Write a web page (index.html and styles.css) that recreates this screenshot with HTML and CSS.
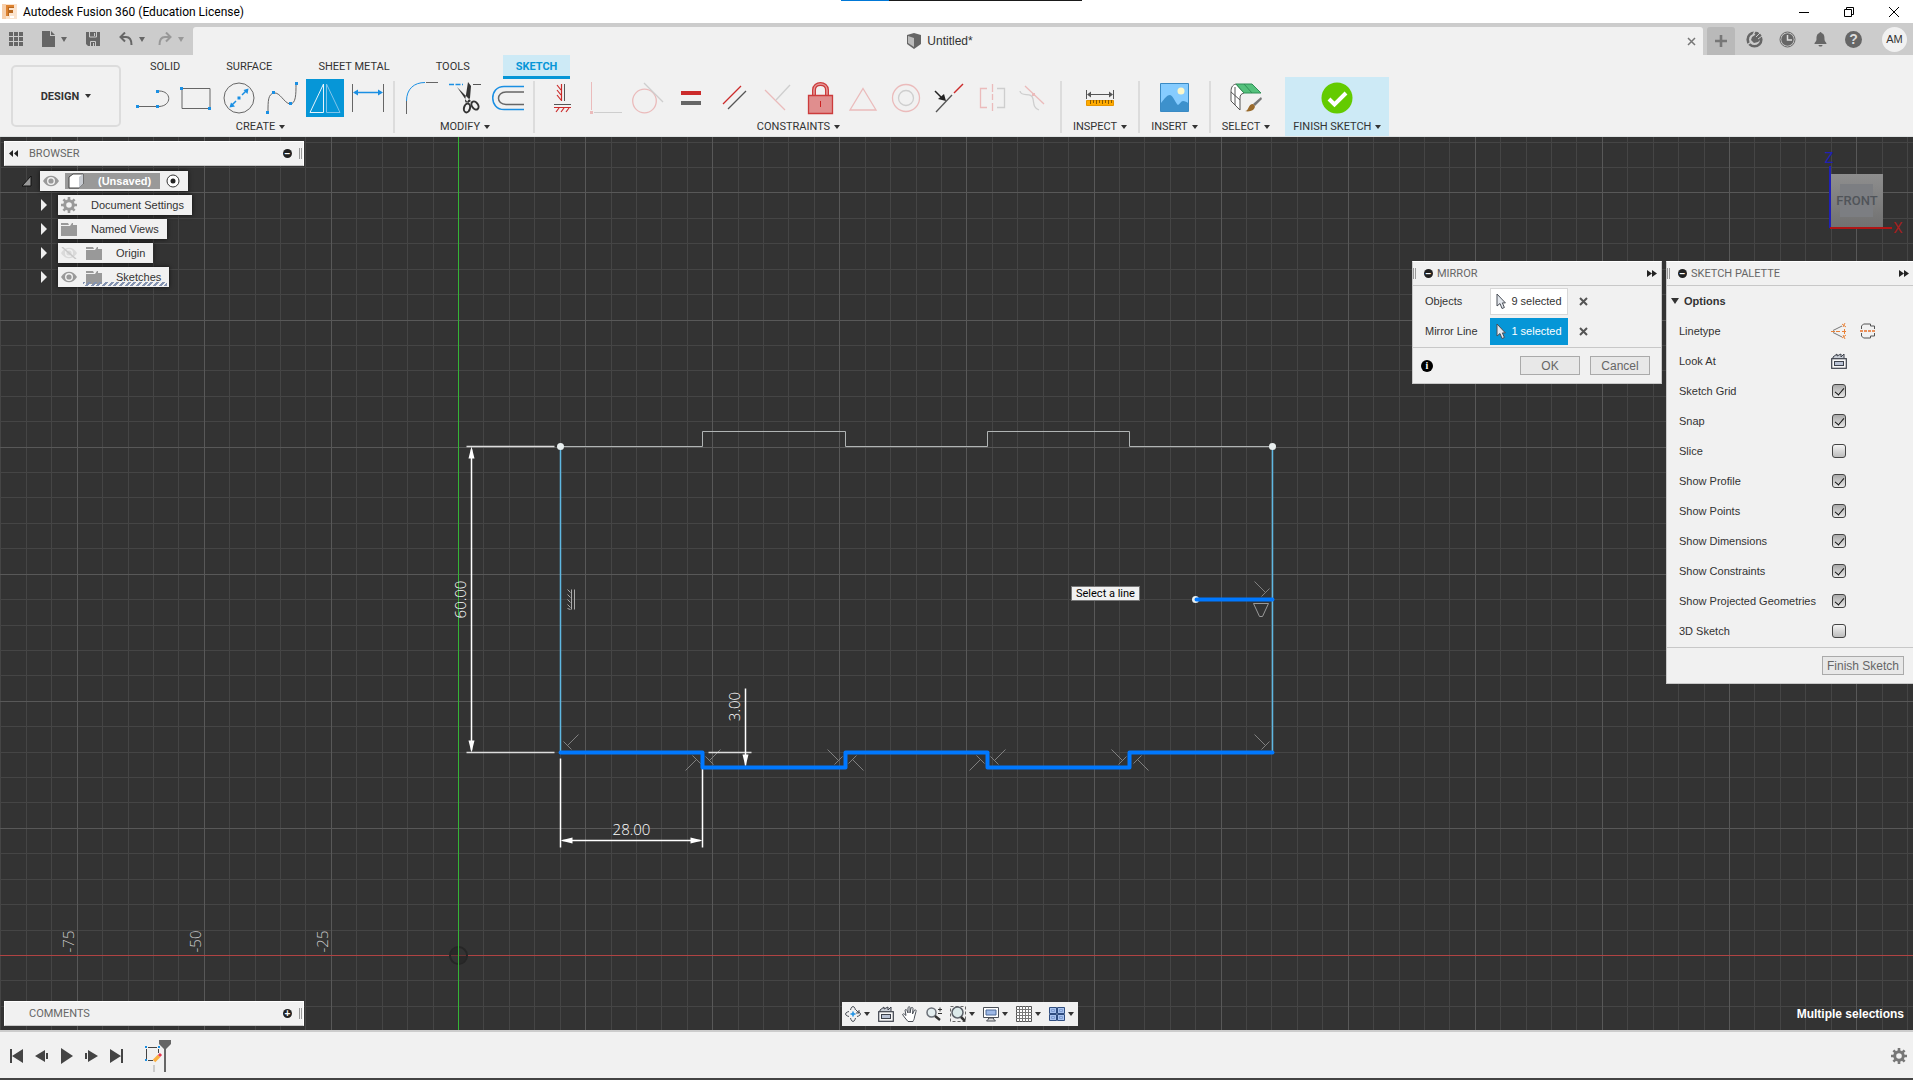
FILE: index.html
```html
<!DOCTYPE html>
<html lang="en">
<head>
    <meta charset="UTF-8">
    <meta name="viewport" content="width=device-width, initial-scale=1.0">
    <title>Autodesk Fusion 360 (Education License)</title>
    <link rel="stylesheet" href="styles.css">
</head>
<body>

<svg class="defs" width="0" height="0" aria-hidden="true">
    <symbol id="eye" viewBox="0 0 16 12">
        <path d="M0 6C4 -1 12 -1 16 6C12 13 4 13 0 6Z" fill="#999"/>
        <circle cx="8" cy="6" r="4" fill="#f1f1f1"/>
        <circle cx="8" cy="6" r="2.6" fill="#999"/>
    </symbol>
    <symbol id="folder" viewBox="0 0 16 14">
        <path d="M0 1h7l1 2H0zM0 4h9l2-3h1v2h4v11H0z" fill="#999"/>
    </symbol>
    <symbol id="gear" viewBox="-8 -8 16 16">
        <circle r="4.3" fill="none" stroke="currentColor" stroke-width="3"/>
        <path d="M0-8v3M0 8v-3M-8 0h3M8 0h-3M-5.6-5.6l2 2M5.6-5.6l-2 2M-5.6 5.6l2-2M5.6 5.6l-2-2" stroke="currentColor" stroke-width="2.6"/>
    </symbol>
    <symbol id="lookat" viewBox="0 0 16 16">
        <path d="M2 6V4l4-3v2l4-2v3l3-3v4" fill="#c9ced6" stroke="#3c414b"/>
        <rect x="0.7" y="5.7" width="14.6" height="9.6" fill="#f8f8f8" stroke="#3c414b" stroke-width="1.2"/>
        <rect x="3.5" y="8.5" width="9" height="4" fill="#b9c2d4" stroke="#3c414b"/>
    </symbol>
    <symbol id="cursor" viewBox="0 0 10 17">
        <path d="M1 1v12l3-2.5 2 5 2.4-1-2-4.6h3z" fill="#e4e8ee" stroke="#4a4f57"/>
    </symbol>
</svg>

<div id="app">
    <header class="titlebar">
        <svg width="15" height="15" viewBox="0 0 15 15"><rect width="15" height="15" fill="#fbe3cd"/><path d="M0 0h4v15H0z" fill="#f7cfab"/><path d="M4 1h8v3H7v2h4v3H7v3H4z" fill="#b8671f"/><path d="M4 1h8v2H6v9H4z" fill="#dd8230"/><path d="M8 12h4v2H8z" fill="#fff"/></svg>
        <h1>Autodesk Fusion 360 (Education License)</h1>
        <div class="drag-strip"></div>
        <div class="window-buttons">
            <button aria-label="Minimize"><svg width="12" height="12"><path d="M1 6.500h10" stroke="#000"/></svg></button>
            <button aria-label="Restore"><svg width="12" height="12" fill="none" stroke="#000"><path d="M1.500 3.500h7v7h-7zM3.500 3.500v-2h7v7h-2"/></svg></button>
            <button aria-label="Close"><svg width="12" height="12"><path d="M1 1l10 10M11 1L1 11" stroke="#000"/></svg></button>
        </div>
    </header>

    <div class="tabstrip">
        <div class="quick-access">
            <button aria-label="Data panel"><svg width="14" height="14" fill="#666"><path d="M0 0h4v4H0zM5 0h4v4H5zM10 0h4v4h-4zM0 5h4v4H0zM5 5h4v4H5zM10 5h4v4h-4zM0 10h4v4H0zM5 10h4v4H5zM10 10h4v4h-4z"/></svg></button>
            <button aria-label="File"><svg width="13" height="16" fill="#666"><path d="M0 0h8v5h5v11H0zM9 0l4 4H9z"/></svg><span class="caret"></span></button>
            <button aria-label="Save"><svg width="14" height="14"><path d="M0 0h14v14H2L0 12z" fill="#666"/><path d="M3.500 0v5h7V0M4.500 14V9.500h5V14" fill="none" stroke="#ccc"/><path d="M7 11h1v3H7zM8 1h1v3H8z" fill="#ccc"/></svg></button>
            <button aria-label="Undo"><svg width="14" height="14"><path d="M1.500 5H7c4 0 5.500 3 5.500 8M6 0.500L1.500 5 6 9.500" fill="none" stroke="#666" stroke-width="2"/></svg><span class="caret"></span></button>
            <button class="disabled" aria-label="Redo"><svg width="14" height="14"><path d="M12.500 5H7c-4 0-5.500 3-5.500 8M8 0.500L12.500 5 8 9.500" fill="none" stroke="#666" stroke-width="2"/></svg><span class="caret"></span></button>
        </div>
        <div class="doc-tab">
            <span class="doc-name">
                <svg width="14" height="16"><path d="M0 2l7-2 7 2v9l-7 5-7-5z" fill="#666"/><path d="M1 3l6 2v9l-6-4z" fill="#bbb"/></svg>
                Untitled*
            </span>
            <button aria-label="Close document"><svg width="9" height="9"><path d="M1 1l7 7M8 1L1 8" stroke="#777" stroke-width="1.500"/></svg></button>
        </div>
        <button class="new-tab" aria-label="New document"><svg width="14" height="14"><path d="M7 1v12M1 7h12" stroke="#777" stroke-width="2.600"/></svg></button>
        <div class="account">
            <button aria-label="Extensions"><svg width="17" height="17"><circle cx="8.500" cy="8.500" r="6.800" fill="none" stroke="#666" stroke-width="2.600"/><path d="M1 14l7-5M9 0l-2 4" stroke="#ccc" stroke-width="1.500" fill="none"/><path d="M6 6l3-2 1-3 2 0 0 3 3 0-1 3 1 1-3 3-4 1-3-3z" fill="#666"/><path d="M10 6l4-4M12 8l4-3" stroke="#ccc" stroke-width="1"/></svg></button>
            <button aria-label="Job status"><svg width="17" height="17"><circle cx="8.500" cy="8.500" r="7.500" fill="none" stroke="#666"/><circle cx="8.500" cy="8.500" r="6.200" fill="#666"/><path d="M8.500 4v5h4.500" fill="none" stroke="#ddd" stroke-width="1.500"/></svg></button>
            <button aria-label="Notifications"><svg width="17" height="17" fill="#666"><path d="M8.500 1c1 0 1 1 1 1 3 1 3 4 3 6 0 3 2 3 2 5h-12c0-2 2-2 2-5 0-2 0-5 3-6 0 0 0-1 1-1zM6.500 14h4c0 2-4 2-4 0z"/></svg></button>
            <button class="help" aria-label="Help">?</button>
            <button class="avatar">AM</button>
        </div>
    </div>

    <div class="ribbon">
        <button class="workspace">DESIGN <span class="caret"></span></button>
        <div class="ribbon-body">
            <nav class="ribbon-tabs">
                <button>SOLID</button>
                <button>SURFACE</button>
                <button>SHEET METAL</button>
                <button>TOOLS</button>
                <button class="active">SKETCH</button>
            </nav>
            <div class="groups">
                <section class="group">
                    <div class="tools">
                        <button aria-label="Line"><svg width="34" height="34" fill="none"><path d="M2 25.500h20M23 10c13 0 13 15 0 15.500" stroke="#666"/><path d="M0 24h3v3H0zM20 24h3v3h-3zM20 9h3v3h-3z" fill="#1a8fe3"/></svg></button>
                        <button aria-label="Rectangle"><svg width="34" height="34" fill="none"><path d="M3 7.500h28v20H3z" stroke="#666"/><path d="M1 6h3v3H1zM29 26h3v3h-3z" fill="#1a8fe3"/></svg></button>
                        <button aria-label="Circle"><svg width="34" height="34" fill="none"><circle cx="17" cy="17" r="15" stroke="#666"/><path d="M9 25l5-5M20 14l5-5" stroke="#1a8fe3" stroke-width="1.500"/><path d="M7.500 26.500l1.500-5 4 4zM26.500 7.500l-5 1.500 4 4zM15.500 15.500h3v3h-3z" fill="#1a8fe3"/></svg></button>
                        <button aria-label="Spline"><svg width="34" height="34" fill="none"><path d="M3 31C3 20 3 13 9 12s10 10 16 11c6 0 6-10 6-20" stroke="#666"/><path d="M1 30h3v3H1zM7 10h3v3H7zM24 21h3v3h-3zM30 1h3v3h-3z" fill="#1a8fe3"/></svg></button>
                        <button class="active" aria-label="Mirror"><svg width="34" height="34" fill="none"><path d="M15.500 3v28.500H2z" stroke="#e8f4fb"/><path d="M18.500 3v28.500H32z" stroke="#7fc4ea"/></svg></button>
                        <button aria-label="Dimension"><svg width="34" height="34" fill="none"><path d="M1.500 3v28M32.500 3v28" stroke="#666"/><path d="M4 11.500h26" stroke="#1a8fe3" stroke-width="1.500"/><path d="M2 11.500l5-3v6zM32 11.500l-5-3v6z" fill="#1a8fe3"/></svg></button>
                    </div>
                    <button class="group-label">CREATE <span class="caret"></span></button>
                </section>
                <section class="group">
                    <div class="tools">
                        <button aria-label="Fillet"><svg width="34" height="34" fill="none"><path d="M1.500 20v13M21 1.500h12" stroke="#666"/><path d="M1.500 20C1.500 8 9 1.500 20 1.500" stroke="#1a8fe3"/></svg></button>
                        <button aria-label="Trim"><svg width="34" height="34" fill="none"><path d="M1 3.500h14" stroke="#1a8fe3" stroke-width="1.300" stroke-dasharray="5 1.500"/><path d="M25 3.500h8" stroke="#555"/><path d="M9 6l11 16 3-2zM20 1l3 4-1 12-4 5-1-2z" fill="#333"/><ellipse cx="19" cy="27" rx="3" ry="4.500" transform="rotate(15 19 27)" stroke="#333" stroke-width="2"/><ellipse cx="27" cy="24.500" rx="4.500" ry="3" transform="rotate(55 27 24.500)" stroke="#333" stroke-width="2"/></svg></button>
                        <button aria-label="Offset"><svg width="34" height="34" fill="none"><path d="M33 5.500H13c-15 0-15 23 0 23h20" stroke="#1a8fe3" stroke-width="1.500"/><path d="M33 11H15c-10 0-10 12.500 0 12.500h18" stroke="#666" stroke-width="1.500"/></svg></button>
                    </div>
                    <button class="group-label">MODIFY <span class="caret"></span></button>
                </section>
                <section class="group">
                    <div class="tools">
                        <button aria-label="Horizontal/Vertical"><svg width="34" height="34" fill="none"><path d="M19.500 3v17M9 23.500h17" stroke="#555"/><path d="M16.500 3v17M9 26.500h17M12 4l4 5M12 9l4 5M12 14l4 5M14 27l-3 4M19 27l-3 4M24 27l-3 4" stroke="#cc2b2b" stroke-width="1.200"/></svg></button>
                        <button class="faded" aria-label="Coincident"><svg width="34" height="34" fill="none"><path d="M3.500 1v28" stroke="#d33"/><path d="M6 31.500h28" stroke="#777"/><path d="M2 30h3v3H2z" fill="#d33"/></svg></button>
                        <button class="faded" aria-label="Tangent"><svg width="34" height="34" fill="none"><circle cx="13.500" cy="20" r="11.800" stroke="#d33" stroke-width="1.300"/><path d="M13 2l19 19" stroke="#777" stroke-width="1.300"/></svg></button>
                        <button aria-label="Equal"><svg width="34" height="34"><path d="M7 10h20v4H7z" fill="#cc2b2b"/><path d="M7 20h20v4H7z" fill="#666"/></svg></button>
                        <button aria-label="Parallel"><svg width="34" height="34"><path d="M6 23L24 5" stroke="#cc2b2b" stroke-width="1.300"/><path d="M11 28l18-18" stroke="#555" stroke-width="1.300"/></svg></button>
                        <button class="faded" aria-label="Perpendicular"><svg width="34" height="34"><path d="M5 9l20 20" stroke="#d33" stroke-width="1.300"/><path d="M16 19L30 4" stroke="#777" stroke-width="1.300"/></svg></button>
                        <button aria-label="Fix/Unfix"><svg width="34" height="34" fill="none"><path d="M11 14V9c0-8 13-8 13 0v5" stroke="#cc3c3c" stroke-width="4"/><path d="M11 14V9c0-8 13-8 13 0v5" stroke="#e59a9a" stroke-width="1.500"/><path d="M5.500 14.500h24v18h-24z" fill="#e08e8e" stroke="#cc3c3c" stroke-width="1.300"/><path d="M17.500 20v6" stroke="#c22"/></svg></button>
                        <button class="faded" aria-label="Midpoint"><svg width="34" height="34" fill="none"><path d="M17 7.500l13 21.500H4z" stroke="#d33" stroke-width="1.300"/></svg></button>
                        <button class="faded" aria-label="Concentric"><svg width="34" height="34" fill="none"><circle cx="17" cy="17" r="13.500" stroke="#d33" stroke-width="1.300"/><circle cx="17" cy="17" r="7.500" stroke="#777" stroke-width="1.300"/></svg></button>
                        <button aria-label="Collinear"><svg width="34" height="34"><path d="M4 31l16-17" stroke="#555" stroke-width="1.300"/><path d="M22 12l9-9" stroke="#cc2b2b" stroke-width="1.500"/><path d="M3 10l6 6" stroke="#222" stroke-width="1.500"/><path d="M14 20l-8-2 6-5z" fill="#222"/></svg></button>
                        <button class="faded" aria-label="Symmetry"><svg width="34" height="34" fill="none"><path d="M12 7.500H5.500v19H12M17.500 3v8M17.500 13v6M17.500 22v8" stroke="#d33" stroke-width="1.300"/><path d="M22 7.500h7.500v19H22" stroke="#777" stroke-width="1.300"/></svg></button>
                        <button class="faded" aria-label="Curvature"><svg width="34" height="34" fill="none"><path d="M7 5l19 18" stroke="#d33" stroke-width="1.300"/><path d="M2 10c1 7 12 0 13 8 1 4 0 9 6 11" stroke="#777" stroke-width="1.300"/><path d="M14 12h3v3h-3z" fill="#d33"/></svg></button>
                    </div>
                    <button class="group-label">CONSTRAINTS <span class="caret"></span></button>
                </section>
                <section class="group narrow">
                    <div class="tools">
                        <button aria-label="Measure"><svg width="34" height="34" fill="none"><path d="M3.500 9v9M30.500 9v9M5 13.500h24" stroke="#555"/><path d="M4 13.500l4-3v6zM30 13.500l-4-3v6z" fill="#555"/><path d="M3.500 19.500h27v5h-27z" fill="#ffab00" stroke="#e69500"/><path d="M7.500 19v4M10.500 19v3M13.500 19v4M16.500 19v3M19.500 19v4M22.500 19v3M25.500 19v4M28.500 19v3" stroke="#8a5a00"/></svg></button>
                    </div>
                    <button class="group-label">INSPECT <span class="caret"></span></button>
                </section>
                <section class="group narrow">
                    <div class="tools">
                        <button aria-label="Insert image"><svg width="34" height="34"><path d="M3.500 2.500h28v28h-28z" fill="#86ccff" stroke="#3a8ac4"/><circle cx="24" cy="10" r="3.500" fill="#fdf7c9"/><path d="M4 22c4-5 6-8 9-8s6 9 8 10c2-1 3-4 5-4s4 1 5 2v8H4z" fill="#3d91cc"/></svg></button>
                    </div>
                    <button class="group-label">INSERT <span class="caret"></span></button>
                </section>
                <section class="group narrow">
                    <div class="tools">
                        <button aria-label="Select"><svg width="34" height="34"><path d="M7 3c-4 1-5 4-5 8v9l9 9V17c0-3 1-4 4-5z" fill="#fff" stroke="#555"/><path d="M2 11l9 8M6 6v18" stroke="#555" fill="none"/><path d="M7 3h16l9 9H15z" fill="#54c17c" stroke="#2f8f56"/><path d="M15 3l8 9" stroke="#2f8f56"/><path d="M24 23l8-7 1 2-7 7z" fill="#777"/><path d="M16 30c4 0 3-7 8-7 3 2 2 4 0 6-2 1-5 2-8 1z" fill="#996a2c"/></svg></button>
                    </div>
                    <button class="group-label">SELECT <span class="caret"></span></button>
                </section>
                <section class="group finish">
                    <div class="tools">
                        <button aria-label="Finish"><svg width="34" height="34" fill="none"><circle cx="17" cy="17" r="15.500" fill="#63cb00"/><path d="M9 18l5.500 5.500L26 12" stroke="#fff" stroke-width="4"/></svg></button>
                    </div>
                    <button class="group-label">FINISH SKETCH <span class="caret"></span></button>
                </section>
            </div>
        </div>
    </div>

    <main class="canvas">
        <svg class="drawing">
            <defs>
                <g id="perp"><path d="M0 0L11-11M-4-4L4 4"/></g>
                <path id="arrow" d="M0 0L-3 12H3Z"/>
            </defs>
            <g transform="translate(458.500 818.500)" fill="none">
                <g id="grid" shape-rendering="crispEdges">
                    <path class="minor"/>
                    <path class="major"/>
                </g>
                <path d="M-500 0H2000" stroke="#b04343"/>
                <circle r="8.500" stroke="#262626" stroke-width="2"/>
                <path d="M0 0V-8A8 8 0 0 0-8 0ZM0 0V8A8 8 0 0 0 8 0Z" fill="#292929"/>
                <path d="M0-900V300" stroke="#35b435"/>
                <g class="axis-labels">
                    <text transform="translate(-385 -14) rotate(-90)">-75</text>
                    <text transform="translate(-258 -14) rotate(-90)">-50</text>
                    <text transform="translate(-131 -14) rotate(-90)">-25</text>
                </g>

                <!-- profile -->
                <path d="M102-509H244V-524H387V-509H529V-524H671V-509H814" stroke="#b0b4b4"/>
                <path d="M102-509V-203M814-509V-203" stroke="#5fb8e2" stroke-width="1.500"/>

                <g stroke="#808080">
                    <use href="#perp" transform="translate(109 -210)"/>
                    <use href="#perp" transform="translate(238 -196) rotate(180)"/>
                    <use href="#perp" transform="translate(251 -195)"/>
                    <use href="#perp" transform="translate(380 -195) rotate(-90)"/>
                    <use href="#perp" transform="translate(394 -196) rotate(90)"/>
                    <use href="#perp" transform="translate(522 -196) rotate(180)"/>
                    <use href="#perp" transform="translate(536 -195)"/>
                    <use href="#perp" transform="translate(664 -195) rotate(-90)"/>
                    <use href="#perp" transform="translate(679 -196) rotate(90)"/>
                    <use href="#perp" transform="translate(807 -210) rotate(-90)"/>
                    <use href="#perp" transform="translate(807 -363) rotate(-90)"/>
                    <path d="M795-352H810L804-339H801Z" stroke="#999"/>
                    <path d="M113-366V-346M116-366V-346" stroke="#aaa"/>
                    <path d="M109-366l3 3M109-361l3 3M109-356l3 3M109-351l3 3M109-347l3 1" stroke="#aaa"/>
                </g>

                <!-- dimensions -->
                <g stroke="#fff" stroke-width="1.500">
                    <path d="M8-509H96M8-203H96M250-203H293" stroke="#ddd"/>
                    <path d="M13-506V-205M287-267V-190M102-197V-108M244-187V-108M104-115H242"/>
                </g>
                <g fill="#fff">
                    <use href="#arrow" transform="translate(13 -509)"/>
                    <use href="#arrow" transform="translate(13 -203) rotate(180)"/>
                    <use href="#arrow" transform="translate(287 -189) rotate(180)"/>
                    <use href="#arrow" transform="translate(102 -115) rotate(-90)"/>
                    <use href="#arrow" transform="translate(244 -115) rotate(90)"/>
                </g>
                <g class="dimension-labels">
                    <text transform="translate(7 -356) rotate(-90)">60.00</text>
                    <text transform="translate(281 -249) rotate(-90)">3.00</text>
                    <text transform="translate(173 -121)">28.00</text>
                </g>

                <circle cx="737" cy="-356" r="3.500" fill="#e8eeee"/>
                <path d="M102-203H244V-188H387V-203H529V-188H671V-203H814M738-356H814" stroke="#0078ff" stroke-width="4" stroke-linejoin="round" stroke-linecap="round"/>
                <circle cx="102" cy="-509" r="3.500" fill="#e8eeee"/>
                <circle cx="814" cy="-509" r="3.500" fill="#e8eeee"/>
            </g>
        </svg>
        <div class="tooltip">Select a line</div>

        <div class="view-cube">
            <svg width="90" height="100" viewBox="0 -10 90 100">
                <defs>
                    <linearGradient id="face" x2="0" y2="1"><stop stop-color="#8e8e8e"/><stop offset="1" stop-color="#717171"/></linearGradient>
                </defs>
                <path d="M16 25h52v53H16z" fill="url(#face)"/>
                <path d="M25 35h33v33H25z" fill="#7c7e82"/>
                <text x="42" y="56" font-size="13" font-weight="500" fill="#505459">FRONT</text>
                <path d="M15 17v62" stroke="#2020b8" stroke-width="2"/>
                <path d="M15 79h62" stroke="#b01515" stroke-width="2"/>
                <text x="14" y="14" font-size="15" fill="#2020b8">Z</text>
                <text x="83" y="84" font-size="15" fill="#a02020">X</text>
            </svg>
        </div>

        <div class="browser">
            <div class="bar">
                <svg width="9" height="7"><path d="M4 0v7L0 3.500zM9 0v7L5 3.500z" fill="#222"/></svg>
                <span class="bar-title">BROWSER</span>
                <button class="dot" aria-label="Collapse">&minus;</button>
                <span class="grip"></span>
            </div>
            <ul class="tree">
                <li class="root">
                    <svg width="10" height="12"><path d="M9 1v10H0z" fill="#999" stroke="#111"/></svg>
                    <span class="node">
                        <svg width="16" height="12"><use href="#eye"/></svg>
                        <span class="selected">
                            <svg width="16" height="16"><path d="M1 4l4-3h10v10l-4 4H1z" fill="#fff" stroke="#444"/><path d="M11 4l4-3v10l-4 4z" fill="#c8ccd2"/></svg>
                            (Unsaved)
                        </span>
                        <svg width="14" height="14"><circle cx="7" cy="7" r="6" fill="#fff" stroke="#333"/><circle cx="7" cy="7" r="2.500" fill="#222"/></svg>
                    </span>
                </li>
                <li>
                    <span class="expander"></span>
                    <span class="node"><svg class="gray" width="16" height="16"><use href="#gear"/></svg><span>Document Settings</span></span>
                </li>
                <li>
                    <span class="expander"></span>
                    <span class="node"><svg width="16" height="14"><use href="#folder"/></svg><span>Named Views</span></span>
                </li>
                <li>
                    <span class="expander"></span>
                    <span class="node"><svg width="16" height="12" opacity="0.250"><use href="#eye"/><path d="M1 0l14 12" stroke="#555" stroke-width="1.500"/></svg><svg width="16" height="14"><use href="#folder"/></svg><span>Origin</span></span>
                </li>
                <li>
                    <span class="expander"></span>
                    <span class="node sketches"><svg width="16" height="12"><use href="#eye"/></svg><svg width="16" height="14"><use href="#folder"/></svg><span>Sketches</span></span>
                </li>
            </ul>
        </div>

        <section class="panel mirror">
            <div class="bar">
                <span class="grip"></span>
                <button class="dot" aria-label="Collapse">&minus;</button>
                <span class="bar-title">MIRROR</span>
                <svg width="10" height="7"><path d="M0 0v7l5-3.500zM5 0v7l5-3.500z" fill="#222"/></svg>
            </div>
            <div class="mirror-rows">
                <div class="row">
                    <label for="objects">Objects</label>
                    <button id="objects" class="picker"><svg width="10" height="17"><use href="#cursor"/></svg>9 selected</button>
                    <button class="clear" aria-label="Clear objects"><svg width="9" height="9"><path d="M1 1l7 7M8 1L1 8" stroke="#555" stroke-width="2"/></svg></button>
                </div>
                <div class="row">
                    <label for="mirrorLine">Mirror Line</label>
                    <button id="mirrorLine" class="picker active"><svg width="10" height="17"><use href="#cursor"/></svg>1 selected</button>
                    <button class="clear" aria-label="Clear mirror line"><svg width="9" height="9"><path d="M1 1l7 7M8 1L1 8" stroke="#555" stroke-width="2"/></svg></button>
                </div>
            </div>
            <div class="panel-footer">
                <span class="info">i</span>
                <button class="push">OK</button>
                <button class="push">Cancel</button>
            </div>
        </section>

        <section class="panel palette">
            <div class="bar">
                <span class="grip"></span>
                <button class="dot" aria-label="Collapse">&minus;</button>
                <span class="bar-title">SKETCH PALETTE</span>
                <svg width="10" height="7"><path d="M0 0v7l5-3.500zM5 0v7l5-3.500z" fill="#222"/></svg>
            </div>
            <div class="options">
                <h2><span class="caret"></span>Options</h2>
                <div class="row">
                    <span class="name">Linetype</span>
                    <button aria-label="Construction"><svg width="16" height="16" fill="none"><path d="M11 3L2 7.500M11 14L2 9.500" stroke="#777"/><path d="M0 8.500h4M5 8.500h4M13.500 6v5M11 8.500h4M11 1l4 3M14 0l-2 4M11 15l4-3M14 16l-2-4" stroke="#e8833a"/></svg></button>
                    <button aria-label="Centerline"><svg width="16" height="16" fill="none"><path d="M1.500 6V3l2-2h7v2h4v3M1.500 10v3l2 2h7v-2h4v-3" stroke="#555"/><path d="M0 8h16" stroke="#e8702a" stroke-width="1.500" stroke-dasharray="3 1"/></svg></button>
                </div>
                <div class="row">
                    <span class="name">Look At</span>
                    <button aria-label="Look At"><svg width="16" height="16"><use href="#lookat"/></svg></button>
                </div>
                <div class="row"><label for="grid-on">Sketch Grid</label><input type="checkbox" id="grid-on" checked></div>
                <div class="row"><label for="snap">Snap</label><input type="checkbox" id="snap" checked></div>
                <div class="row"><label for="slice">Slice</label><input type="checkbox" id="slice"></div>
                <div class="row"><label for="profile">Show Profile</label><input type="checkbox" id="profile" checked></div>
                <div class="row"><label for="points">Show Points</label><input type="checkbox" id="points" checked></div>
                <div class="row"><label for="dims">Show Dimensions</label><input type="checkbox" id="dims" checked></div>
                <div class="row"><label for="cons">Show Constraints</label><input type="checkbox" id="cons" checked></div>
                <div class="row"><label for="proj">Show Projected Geometries</label><input type="checkbox" id="proj" checked></div>
                <div class="row"><label for="sketch3d">3D Sketch</label><input type="checkbox" id="sketch3d"></div>
            </div>
            <div class="panel-footer">
                <button class="push wide">Finish Sketch</button>
            </div>
        </section>

        <div class="bar comments">
            <span class="bar-title">COMMENTS</span>
            <button class="dot" aria-label="Expand">+</button>
            <span class="grip"></span>
        </div>

        <div class="navbar">
            <button aria-label="Orbit"><svg width="16" height="16" fill="none" stroke="#4a4f57"><ellipse cx="8" cy="8" rx="7.500" ry="3"/><ellipse cx="8" cy="8" rx="3" ry="7.500"/><path d="M4 4h8v8H4z" fill="#f1f1f1" stroke="none"/><path d="M8 5.500v5M5.500 8h5" stroke="#1a8fe3" stroke-width="1.500"/><path d="M11 4l3 3M14 4v3h-3"/></svg><span class="caret"></span></button>
            <button aria-label="Look At"><svg width="16" height="16"><use href="#lookat"/></svg></button>
            <button aria-label="Pan"><svg width="16" height="16"><path d="M6 15.500C4 13 2 11 0.500 8.500 1 7.500 2 7.500 4 9.500L3 4c1-1 1.500-.5 2 .5L6 7V1.500c1-1 2-1 2 0V7l1-5c1-1 2-.5 2 .5L10.500 8l2-4c1-.5 2 0 1.500 1.500L12.500 11c0 2-1 3-1.500 4.500z" fill="#fff" stroke="#4a4f57"/></svg></button>
            <button aria-label="Zoom"><svg width="16" height="16"><circle cx="5.500" cy="6.500" r="4.500" fill="#e4eef0" stroke="#6b7078" stroke-width="1.500"/><path d="M9 10l5 4" stroke="#333" stroke-width="2.500"/><path d="M12 3.500h4M14 1.500v4M12 7.500h4" stroke="#333"/></svg></button>
            <button aria-label="Fit"><svg width="16" height="16"><path d="M.5.500h15v15H.5z" fill="none" stroke="#666" stroke-dasharray="3 2"/><circle cx="7.500" cy="6.500" r="5.500" fill="#dceaea" stroke="#5b6068" stroke-width="1.500"/><path d="M11 11l4 4" stroke="#333" stroke-width="2.500"/></svg><span class="caret"></span></button>
            <button aria-label="Display settings"><svg width="16" height="16"><path d="M.5 1.500h15v10H.5z" fill="#fff" stroke="#4a4f57"/><path d="M3 4h10v5H3z" fill="#9db8e6" stroke="#4d6896"/><path d="M5.500 12h5v1l2 2h-9l2-2z" fill="#ddd" stroke="#4a4f57"/></svg><span class="caret"></span></button>
            <button aria-label="Grid and snaps"><svg width="16" height="16"><path d="M.5.500h15v15H.5z" fill="#fff" stroke="#555"/><path d="M3.500 0v16M6.500 0v16M9.500 0v16M12.500 0v16M0 3.500h16M0 6.500h16M0 9.500h16M0 12.500h16" stroke="#777"/></svg><span class="caret"></span></button>
            <button aria-label="Viewports"><svg width="16" height="16"><path d="M.5 1.500h7v6h-7zM8.500 1.500h7v6h-7zM.5 8.500h7v6h-7zM8.500 8.500h7v6h-7z" fill="#a9c3ee" stroke="#2f4d80"/><path d="M2.500 3.500h3v2h-3zM10.500 3.500h3v2h-3zM2.500 10.500h3v2h-3zM10.500 10.500h3v2h-3z" fill="none" stroke="#7f9dd2"/></svg><span class="caret"></span></button>
        </div>

        <div class="status">Multiple selections</div>
    </main>

    <footer class="timeline">
        <button aria-label="Go to start"><svg width="13" height="14" fill="#444"><path d="M0 0h2v14H0zM13 0v14L2 7z"/></svg></button>
        <button aria-label="Step back"><svg width="13" height="14" fill="#444"><path d="M10 1v12L0 7zM11 4h2v6h-2z"/></svg></button>
        <button aria-label="Play"><svg width="13" height="16" fill="#444"><path d="M1 0v16l12-8z"/></svg></button>
        <button aria-label="Step forward"><svg width="13" height="14" fill="#444"><path d="M3 1v12l10-6zM0 4h2v6H0z"/></svg></button>
        <button aria-label="Go to end"><svg width="13" height="14" fill="#444"><path d="M11 0h2v14h-2zM0 0v14l11-7z"/></svg></button>
        <button class="feature" aria-label="Sketch1">
            <svg width="28" height="34" fill="none"><path d="M3 8.500h9M1.500 10v10M13.500 10v4M3 21.500h5" stroke="#444"/><path d="M0 7h2v2H0zM13 7h2v2h-2zM0 20h2v2H0z" fill="#1a8fe3"/><path d="M9 22l5-5" stroke="#fbb040" stroke-width="3.500"/><path d="M14 17l2-2" stroke="#e8344e" stroke-width="3"/><path d="M8 26h2v7H8z" fill="#ccc"/><path d="M14 1h12v4l-5 5v23h-2V10l-5-5z" fill="#666"/></svg>
        </button>
        <button class="settings" aria-label="Timeline settings"><svg width="16" height="16"><use href="#gear"/></svg></button>
    </footer>
    <div class="taskbar-edge"></div>
</div>

<script>
    // One minor cell is 5 mm, every fifth line is a major one
    const CELL = 25.42;

    function gridPath(major) {
        let d = '';
        for (let i = -100; i <= 200; i++) {
            if ((i % 5 === 0) !== major) continue;
            const p = Math.round(i * CELL);
            d += `M${p}-2000V2000M-2000 ${p}H4000`;
        }
        return d;
    }

    document.querySelector('#grid .minor').setAttribute('d', gridPath(false));
    document.querySelector('#grid .major').setAttribute('d', gridPath(true));
</script>

</body>
</html>
```
FILE: styles.css
```css
* {
    box-sizing: border-box;
}
body {
    margin: 0;
    font-family: "Liberation Sans", Arial, sans-serif;
    font-size: 11px;
    color: #333;
}
button {
    display: inline-flex;
    align-items: center;
    justify-content: center;
    padding: 0;
    border: none;
    background: none;
    font: inherit;
    color: inherit;
}
svg {
    display: block;
    flex-shrink: 0;
}
.defs {
    position: absolute;
}
#app {
    display: flex;
    flex-direction: column;
    height: 100vh;
    overflow: hidden;
}
.caret {
    display: inline-block;
    border: 3px solid transparent;
    border-top: 4px solid #333;
    border-bottom: none;
}

/* title bar */
.titlebar {
    position: relative;
    display: flex;
    align-items: center;
    height: 23px;
    padding-left: 2px;
    background: #fff;
}
.titlebar h1 {
    margin: 0 0 0 6px;
    font: 12px Roboto, sans-serif;
    color: #000;
}
.drag-strip {
    position: absolute;
    top: 0;
    left: calc(50% - 116px);
    width: 241px;
    height: 1px;
    background: linear-gradient(to right, #0078d7 48px, #1a1a1a 48px);
}
.window-buttons {
    display: flex;
    gap: 33px;
    margin-left: auto;
    padding-right: 13px;
}

/* document tabs */
.tabstrip {
    display: flex;
    align-items: flex-end;
    height: 32px;
    background: #ccc;
}
.quick-access {
    display: flex;
    align-items: center;
    gap: 19px;
    width: 193px;
    height: 32px;
    padding-left: 9px;
}
.quick-access button {
    gap: 6px;
}
.quick-access .caret {
    border-top-color: #666;
    border-top-width: 5px;
}
.quick-access .disabled {
    margin-left: -6px;
    opacity: 0.5;
}
.doc-tab {
    display: flex;
    align-items: center;
    flex: 1;
    height: 28px;
    padding-right: 7px;
    border-radius: 3px 3px 0 0;
    background: #f1f1f1;
}
.doc-name {
    display: flex;
    flex: 1;
    align-items: center;
    justify-content: center;
    gap: 6px;
    font-size: 12px;
}
.new-tab {
    width: 28px;
    height: 28px;
    margin-left: 4px;
    border-radius: 3px 3px 0 0;
    background: #b9b9b9;
}
.account {
    display: flex;
    align-items: center;
    gap: 16px;
    height: 32px;
    padding: 0 6px 0 11px;
}
.help {
    width: 17px;
    height: 17px;
    border-radius: 50%;
    background: #666;
    color: #ddd;
    font-size: 14px;
    font-weight: bold;
}
.avatar {
    width: 25px;
    height: 25px;
    margin-left: 4px;
    border-radius: 50%;
    background: #f1f1f1;
}

/* ribbon */
.ribbon {
    display: flex;
    height: 82px;
    border-bottom: 1px solid #dfe3e3;
    background: #f1f1f1;
    font-family: Roboto, sans-serif;
}
.workspace {
    gap: 6px;
    width: 110px;
    height: 62px;
    margin: 10px 12px 0 11px;
    border: 2px solid #dcdcdc;
    border-radius: 5px;
    font-weight: bold;
}
.ribbon-body {
    flex: 1;
}
.ribbon-tabs {
    display: flex;
    gap: 20px;
    height: 24px;
    padding-left: 4px;
}
.ribbon-tabs button {
    padding: 0 13px;
    border-top: 1px solid transparent;
    border-bottom: 3px solid transparent;
}
.ribbon-tabs .active {
    border-top-color: #cdeaf6;
    border-bottom-color: #0696d7;
    background: #cdeaf6;
    color: #0696d7;
    font-weight: bold;
}
.groups {
    display: flex;
    height: 57px;
}
.group {
    display: flex;
    flex-direction: column;
    align-items: center;
    padding: 0 6px 0 8px;
}
.group:first-child {
    padding-left: 1px;
}
.group + .group {
    border-left: 2px solid #dcdcdc;
    border-image: linear-gradient(transparent 3px, #dcdcdc 3px, #dcdcdc 53px, transparent 53px) 1;
}
.group.narrow {
    padding: 0 11px;
}
.group + .group.finish {
    margin: -2px 0 0 4px;
    padding: 2px 8px 0;
    border: none;
    background: #cdeaf6;
}
.tools {
    display: flex;
    gap: 5px;
}
.tools button {
    width: 38px;
    height: 38px;
}
.tools .active {
    background: #0696d7;
}
.tools .faded {
    opacity: 0.28;
}
.group-label {
    gap: 4px;
    height: 20px;
    white-space: nowrap;
}

/* canvas */
.canvas {
    position: relative;
    flex: 1;
    overflow: hidden;
    background: #333;
}
.drawing {
    position: absolute;
    width: 100%;
    height: 100%;
}
.minor {
    stroke: #454545;
}
.major {
    stroke: #585858;
}
.axis-labels text,
.dimension-labels text {
    font: 300 15px "Open Sans", sans-serif;
    text-anchor: middle;
    fill: #ccc;
}
.dimension-labels text {
    fill: #fff;
}
.tooltip {
    position: absolute;
    left: 1071px;
    top: 449px;
    padding: 0 4px;
    border: 1px solid #777;
    background: #f1f1f1;
    font: 11px/13px Roboto, sans-serif;
    color: #000;
}
.view-cube {
    position: absolute;
    top: 2px;
    right: 8px;
    font-family: Roboto, sans-serif;
}
.view-cube text {
    text-anchor: middle;
}
.status {
    position: absolute;
    right: 9px;
    bottom: 9px;
    font-size: 12px;
    font-weight: bold;
    color: #fff;
}

/* floating panels */
.bar {
    display: flex;
    align-items: center;
    height: 25px;
    border: 1px solid #fff;
    border-bottom: 1px solid #c8c8c8;
    background: #f1f1f1;
    color: #666;
}
.bar-title {
    flex: 1;
    font-family: Roboto, sans-serif;
}
.dot,
.info {
    display: flex;
    align-items: center;
    justify-content: center;
    width: 9px;
    height: 9px;
    border-radius: 50%;
    background: #222;
    color: #fff;
    font-size: 10px;
    font-weight: bold;
    line-height: 9px;
}
.grip {
    width: 3px;
    height: 11px;
    border: 1px solid #999;
    border-width: 0 1px;
}
.browser {
    position: absolute;
    top: 4px;
    left: 4px;
    width: 300px;
}
.browser .bar {
    padding: 0 1px 0 4px;
}
.browser .bar-title {
    margin-left: 11px;
}
.browser .grip,
.comments .grip {
    margin-left: 7px;
}
.tree {
    display: flex;
    flex-direction: column;
    gap: 4px;
    margin: 5px 0 0;
    padding: 0 0 0 36px;
    list-style: none;
}
.tree li {
    display: flex;
    align-items: center;
    gap: 11px;
}
.tree .root {
    gap: 8px;
    margin-left: -18px;
}
.node {
    display: flex;
    align-items: center;
    gap: 9px;
    height: 20px;
    padding: 0 8px 0 3px;
    background: #f1f1f1;
    box-shadow: 0 0 4px #111;
}
.node > span {
    padding-left: 5px;
}
.root .node {
    gap: 6px;
    padding-right: 8px;
}
.node .selected {
    display: flex;
    align-items: center;
    gap: 14px;
    height: 16px;
    padding: 0 9px 0 3px;
    background: #999;
    color: #fff;
    font-weight: bold;
}
.sketches {
    position: relative;
}
.sketches::after {
    content: "";
    position: absolute;
    left: 25px;
    right: 2px;
    bottom: 1px;
    height: 4px;
    background: repeating-linear-gradient(135deg, #8493b0 0, #8493b0 2px, transparent 2px, transparent 4px);
}
.expander {
    margin-left: 1px;
    border: 6px solid transparent;
    border-left: 6px solid #eee;
    border-right: none;
}
.gray {
    color: #999;
}
.panel {
    position: absolute;
    top: 124px;
    border: 1px solid #c8c8c8;
    border-top-color: #fff;
    background: #f1f1f1;
}
.mirror {
    right: 251px;
    width: 250px;
}
.palette {
    right: 0;
    width: 247px;
    border-right: none;
}
.panel .bar {
    gap: 4px;
    height: 24px;
    padding: 0 4px 0 0;
    border: none;
    border-bottom: 1px solid #c8c8c8;
}
.panel .dot {
    margin-left: 4px;
}
.row {
    display: flex;
    align-items: center;
    height: 30px;
}
.mirror-rows {
    padding: 0 0 1px 12px;
}
.mirror-rows label {
    width: 65px;
}
.picker {
    gap: 5px;
    width: 78px;
    height: 27px;
    border: 1px solid #d8d8d8;
    background: #fff;
}
.picker.active {
    border-color: #0696d7;
    background: #0696d7;
    color: #fff;
}
.clear {
    margin-left: 11px;
}
.panel-footer {
    display: flex;
    align-items: center;
    justify-content: flex-end;
    gap: 10px;
    height: 36px;
    padding: 0 11px 0 8px;
    border-top: 1px solid #c8c8c8;
}
.info {
    width: 12px;
    height: 12px;
    margin-right: auto;
    background: #000;
    font-family: "Liberation Serif", serif;
}
.push {
    width: 60px;
    height: 19px;
    border: 1px solid #aaa;
    background: #e8e8e8;
    color: #666;
    font-size: 12px;
}
.push.wide {
    width: 82px;
}
.options {
    padding: 0 0 1px 12px;
}
.options h2 {
    display: flex;
    align-items: center;
    gap: 5px;
    height: 30px;
    margin: 0 0 0 -8px;
    font-size: 11px;
}
.options h2 .caret {
    border-width: 6px 4px 0;
}
.options label,
.options .name {
    width: 152px;
}
.options .row button {
    margin-right: 13px;
}
.options input {
    appearance: none;
    position: relative;
    width: 14px;
    height: 14px;
    margin: 0 0 0 1px;
    border: 1px solid #444;
    border-radius: 3px;
    background: linear-gradient(#f4f4f4, #bcbcbc);
}
.options input:checked {
    background: linear-gradient(#aaa, #e8e8e8);
}
.options input:checked::after {
    content: "";
    position: absolute;
    left: 4px;
    top: 1px;
    width: 4px;
    height: 8px;
    border: solid #111;
    border-width: 0 1px 1px 0;
    transform: rotate(40deg);
}
.palette .panel-footer {
    padding-right: 9px;
}

/* bottom bars */
.comments {
    position: absolute;
    left: 4px;
    bottom: 4px;
    width: 300px;
    padding: 0 1px 0 24px;
}
.navbar {
    position: absolute;
    left: 50%;
    bottom: 4px;
    display: flex;
    align-items: center;
    gap: 8px;
    height: 24px;
    margin-left: -115px;
    padding: 0 4px 0 3px;
    background: #f1f1f1;
}
.navbar button {
    gap: 3px;
}
.timeline {
    display: flex;
    align-items: center;
    gap: 12px;
    height: 48px;
    padding: 1px 6px 0 10px;
    border-top: 2px solid #ccc;
    background: #f1f1f1;
}
.feature {
    margin-left: 10px;
}
.settings {
    margin-left: auto;
    color: #777;
}
.taskbar-edge {
    height: 2px;
    background: #444;
}
```
